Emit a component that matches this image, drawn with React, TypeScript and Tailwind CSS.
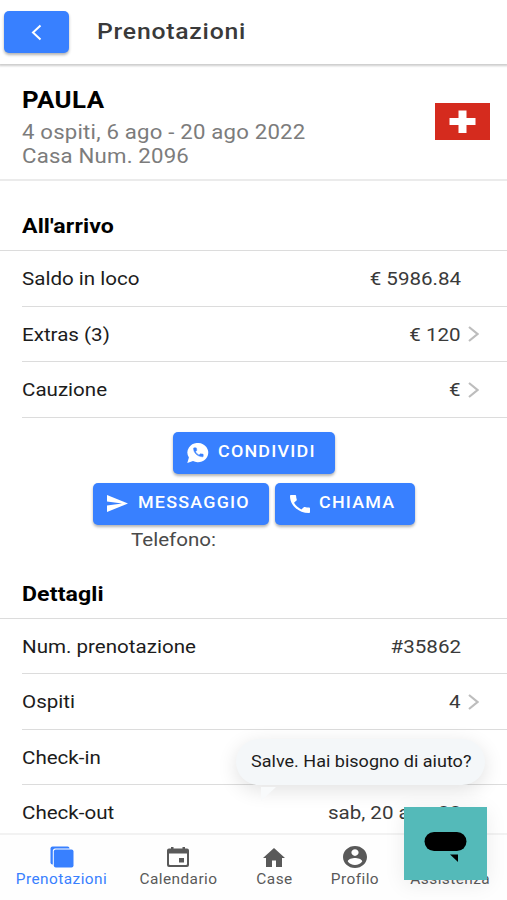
import React from "react";

interface RowProps {
  label: string;
  value?: string;
  arrow?: boolean;
}

const phonePath =
  "M6.62 10.79c1.44 2.83 3.76 5.14 6.59 6.59l2.2-2.2c.27-.27.67-.36 1.02-.24 1.12.37 2.33.57 3.57.57.55 0 1 .45 1 1V20c0 .55-.45 1-1 1-9.39 0-17-7.61-17-17 0-.55.45-1 1-1h3.5c.55 0 1 .45 1 1 0 1.25.2 2.45.57 3.57.11.35.03.74-.25 1.02l-2.2 2.2z";

const Row: React.FC<RowProps> = ({ label, value, arrow }) => (
  <div className="ml-[22px] h-[55.5px] shrink-0 flex items-center border-b-[1.5px] border-[#dcdcdc] pt-[2px] pr-[46px] text-[18.7px]">
    <span className="origin-left scale-x-110 text-[#1c1c1c]">{label}</span>
    <span className="ml-auto origin-right scale-x-110 text-[#3a3a3a]">{value}</span>
    {arrow && (
      <svg className="w-[11px] h-4 ml-[7px] -mt-px -mr-[18px]" viewBox="0 0 11 16">
        <path d="M1 1l8.500 7L1 15" fill="none" stroke="#bdbdbd" strokeWidth="2.200" />
      </svg>
    )}
  </div>
);

interface ButtonProps {
  className: string;
  icon: React.ReactNode;
  label?: string;
}

const Button: React.FC<ButtonProps> = ({ className, icon, label }) => (
  <button
    className={
      className +
      " h-[42px] flex items-center rounded-[5px] bg-[#3880ff] text-white text-[16.3px] font-medium tracking-[1.1px] whitespace-nowrap shadow-[0_2px_3px_rgba(0,0,0,0.3)]"
    }
  >
    {icon}
    {label && <span className="-mt-px origin-left scale-x-110">{label}</span>}
  </button>
);

interface TabProps {
  className: string;
  label: string;
  children: React.ReactNode;
}

const Tab: React.FC<TabProps> = ({ className, label, children }) => (
  <div className={className + " flex flex-col items-center pt-[11px] text-[14px] leading-4 tracking-[0.4px]"}>
    {children}
    <span className="mt-[3px] scale-x-110">{label}</span>
  </div>
);

export const App: React.FC = () => {
  return (
    <div className="relative w-[507px] h-[900px] overflow-hidden flex flex-col bg-white font-['Roboto',sans-serif]">
      {/* Top bar */}
      <header className="h-[64px] shrink-0 flex items-center shadow-[0_1px_2px_1px_rgba(0,0,0,0.2)]">
        <Button
          className="ml-1 w-[65px] justify-center"
          icon={
            <svg className="w-[11px] h-[17px]" viewBox="0 0 11 17">
              <path d="M9.500 1.500L2 8.500l7.500 7" fill="none" stroke="#fff" strokeWidth="2" />
            </svg>
          }
        />
        <h1 className="ml-7 origin-left scale-x-110 text-[22.5px] font-medium tracking-[0.7px] text-[#3a3a3a]">Prenotazioni</h1>
      </header>

      <main className="flex-1 min-h-0 overflow-hidden flex flex-col">
        {/* Guest */}
        <div className="h-[117px] shrink-0 flex items-center justify-between border-b-2 border-[#ebebeb] pl-[22px] pr-[17px]">
          <div className="origin-left scale-x-110 text-[20.2px] leading-6 tracking-[0.17px] text-[#7c7c7c]">
            <h2 className="mt-[11px] mb-[6px] text-[23.5px] leading-7 font-bold tracking-[0.4px] text-black">PAULA</h2>
            <p>4 ospiti, 6 ago - 20 ago 2022</p>
            <p>Casa Num. 2096</p>
          </div>
          <svg className="w-[55px] h-[37px] -mt-px" viewBox="0 0 55 37">
            <path fill="#d52b1e" d="M0 0h55v37H0z" />
            <path fill="#fff" d="M14.500 15h9V7.500h8V15h9v7h-9v8h-8v-8h-9z" />
          </svg>
        </div>

        {/* On arrival */}
        <div className="h-[70px] shrink-0 flex items-end border-b-[1.5px] border-[#dcdcdc] pl-[22px] pb-[12px]">
          <h3 className="origin-left scale-x-110 text-[21px] leading-6 font-bold tracking-[0.1px] text-black">All'arrivo</h3>
        </div>
        <Row label="Saldo in loco" value="€ 5986.84" />
        <Row label="Extras (3)" value="€ 120" arrow />
        <Row label="Cauzione" value="€" arrow />

        {/* Contact actions */}
        <div className="h-[149px] shrink-0 flex flex-col items-center pt-[14px]">
          <Button
            className="w-[162px] shrink-0 pl-[14px]"
            icon={
              <svg className="w-[22px] h-[20px] mr-[9px]" viewBox="0 0 22 20">
                <path fill="#fff" d="M11.500 0A10.300 9.600 0 1 1 6 18L.3 20l1.600-5.500A10.300 9.600 0 0 1 11.500 0z" />
                <path
                  fill="#3880ff"
                  stroke="#3880ff"
                  strokeWidth="0.800"
                  transform="translate(4.900 3.300) scale(.54 .5)"
                  d={phonePath}
                />
              </svg>
            }
            label="CONDIVIDI"
          />
          <div className="mt-[9px] flex gap-[6px]">
            <Button
              className="w-[176px] pl-[14px]"
              icon={
                <svg className="w-[21px] h-[17px] mr-[10px]" viewBox="2 3 21 18" preserveAspectRatio="none">
                  <path fill="#fff" d="M2.010 21L23 12 2.010 3 2 10l15 2-15 2z" />
                </svg>
              }
              label="MESSAGGIO"
            />
            <Button
              className="w-[140px] pl-[15px]"
              icon={
                <svg className="w-[20px] h-[18px] mr-[9.5px]" viewBox="3 3 18 18" preserveAspectRatio="none">
                  <path fill="#fff" d={phonePath} />
                </svg>
              }
              label="CHIAMA"
            />
          </div>
          <p className="self-start ml-[131px] mt-px origin-left scale-x-110 text-[18.7px] leading-7 text-[#4a4a4a]">Telefono:</p>
        </div>

        {/* Details */}
        <div className="h-[52px] shrink-0 flex items-end border-b-[1.5px] border-[#dcdcdc] pl-[22px] pb-[12px]">
          <h3 className="origin-left scale-x-110 text-[21px] leading-6 font-bold tracking-[0.1px] text-black">Dettagli</h3>
        </div>
        <Row label="Num. prenotazione" value="#35862" />
        <Row label="Ospiti" value="4" arrow />
        <Row label="Check-in" />
        <Row label="Check-out" value="sab, 20 ago 22" />
      </main>

      {/* Bottom tabs */}
      <nav className="h-[67px] shrink-0 flex border-t-2 border-[#f2f2f2] bg-[#fefefe] text-[#595959]">
        <Tab className="w-[124px] text-[#3880ff]" label="Prenotazioni">
          <svg className="w-6 h-[22px]" viewBox="0 0 24 22">
            <rect x="0.500" y="0.500" width="19" height="18" rx="2" fill="#3880ff" />
            <rect x="2.800" y="2.600" width="22" height="20" rx="2.500" fill="#fefefe" />
            <rect x="3.800" y="3.600" width="19.700" height="17.900" rx="2" fill="#3880ff" />
          </svg>
        </Tab>
        <Tab className="w-[108px]" label="Calendario">
          <svg className="w-[22px] h-[22px]" viewBox="0 0 22 22">
            <path
              fill="#595959"
              fillRule="evenodd"
              d="M4 1h2.500v1.500h9V1H18v1.500h2q2 0 2 2V19q0 2-2 2H2q-2 0-2-2V4.500q0-2 2-2h2zM2 7.500V18q0 1 1 1h16q1 0 1-1V7.500z"
            />
            <path fill="#595959" d="M12 12h5v4.500h-5z" />
          </svg>
        </Tab>
        <Tab className="w-[84px]" label="Case">
          <svg className="w-[22px] h-[22px]" viewBox="0 0 22 22">
            <path fill="#595959" d="M11 2L0 12h3v9h6v-6.500h4V21h6v-9h3z" />
          </svg>
        </Tab>
        <Tab className="w-[78px]" label="Profilo">
          <svg className="w-6 h-[22px]" viewBox="2 2 20 20" preserveAspectRatio="none">
            <path
              fill="#595959"
              d="M12 2C6.480 2 2 6.480 2 12s4.480 10 10 10 10-4.480 10-10S17.520 2 12 2zm0 3c1.660 0 3 1.340 3 3s-1.340 3-3 3-3-1.340-3-3 1.340-3 3-3zm0 14.200c-2.500 0-4.710-1.280-6-3.220.03-1.990 4-3.080 6-3.080 1.990 0 5.970 1.090 6 3.080-1.290 1.940-3.500 3.220-6 3.220z"
            />
          </svg>
        </Tab>
        <Tab className="w-[113px]" label="Assistenza">
          <div className="h-[22px]" />
        </Tab>
      </nav>

      {/* Chat greeting */}
      <div className="absolute left-[236px] top-[739px] w-[249px] h-[46px] flex items-center justify-center rounded-[23px] bg-[#f4f7f9] pt-px pl-px text-[16.4px] text-[#1c1c1c] whitespace-nowrap shadow-[0_5px_20px_rgba(0,0,0,0.12)]">
        <span className="scale-x-110">Salve. Hai bisogno di aiuto?</span>
        <svg className="absolute left-[25px] top-[48px] w-[15px] h-[14px]" viewBox="0 0 15 14">
          <path fill="#f8fafb" d="M0 0h15L0 14z" />
        </svg>
      </div>

      {/* Chat launcher */}
      <div className="absolute left-[404px] top-[807px] w-[83px] h-[73px] bg-[#54bab9] shadow-[0_4px_20px_rgba(0,0,0,0.08)]">
        <svg className="w-full h-full" viewBox="0 0 83 73">
          <rect x="20.500" y="25" width="42" height="19" rx="9.500" />
          <path d="M46 47.500h8V55z" />
        </svg>
      </div>
    </div>
  );
};
export default App;
